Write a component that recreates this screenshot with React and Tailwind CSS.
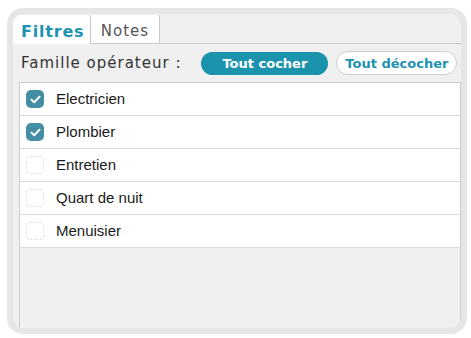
const metiers = [
  { label: "Electricien", checked: true },
  { label: "Plombier", checked: true },
  { label: "Entretien", checked: false },
  { label: "Quart de nuit", checked: false },
  { label: "Menuisier", checked: false },
];

const CheckBox = ({ checked }) => {
  if (!checked) {
    return <div className="w-[18px] h-[18px] rounded-[4px] bg-white border border-dashed border-[#e2e2e2] shrink-0"></div>;
  }
  return (
    <div className="w-[18px] h-[18px] rounded-[5px] bg-[#438ea4] flex items-center justify-center shrink-0">
      <svg width="11" height="9" viewBox="0 0 11 9" fill="none">
        <path d="M1.5 4.6 L4.2 7.2 L9.5 1.8" stroke="white" strokeWidth="2" strokeLinecap="round" strokeLinejoin="round" />
      </svg>
    </div>
  );
};

const App = () => {
  return (
    <div className="w-[471px] h-[338px] bg-white pl-[7px] pt-[8px]">
      <div className="w-[460px] h-[326px] rounded-[16px] bg-[#e6e6e6] p-[6px]">
        <div className="h-full rounded-[11px] bg-[#f0f0f0] overflow-hidden flex flex-col font-['DejaVu_Sans',sans-serif]">
          {/* Tabs */}
          <div className="flex h-[30px] shrink-0 pt-px">
            <div className="w-[77px] bg-white pl-[8px] pt-[5px] flex items-center text-[16px] font-bold tracking-[0.8px] text-[#1d93b1]">
              Filtres
            </div>
            <div className="w-[70px] bg-white border-x border-b border-[#c8c8c8] pt-[4px] flex items-center justify-center text-[15px] tracking-[1px] text-[#555]">
              Notes
            </div>
            <div className="flex-1 border-b border-[#c8c8c8]"></div>
          </div>

          {/* Toolbar */}
          <div className="flex items-center h-[38px] shrink-0 pl-[8px]">
            <span className="text-[15px] tracking-[1px] text-[#333]">Famille opérateur :</span>
            <button className="ml-[20px] h-[23px] px-[21px] rounded-full bg-[#1b93ad] text-white text-[13px] font-bold leading-none">
              Tout cocher
            </button>
            <button className="ml-[8px] h-[24px] px-[8px] rounded-full bg-white border border-[#cfcfcf] text-[#1d93b1] text-[13px] font-bold leading-none">
              Tout décocher
            </button>
          </div>

          {/* List */}
          <div className="flex-1 ml-[6px] flex flex-col border-x border-t border-[#cccccc]">
            {metiers.map((m) => (
              <div key={m.label} className="h-[33px] bg-white border-b border-[#dadada] flex items-center pl-[6px]">
                <CheckBox checked={m.checked} />
                <span className="ml-[12px] font-['Liberation_Sans',sans-serif] text-[15px] text-[#1a1a1a]">{m.label}</span>
              </div>
            ))}
          </div>
        </div>
      </div>
    </div>
  );
};

export default App;
